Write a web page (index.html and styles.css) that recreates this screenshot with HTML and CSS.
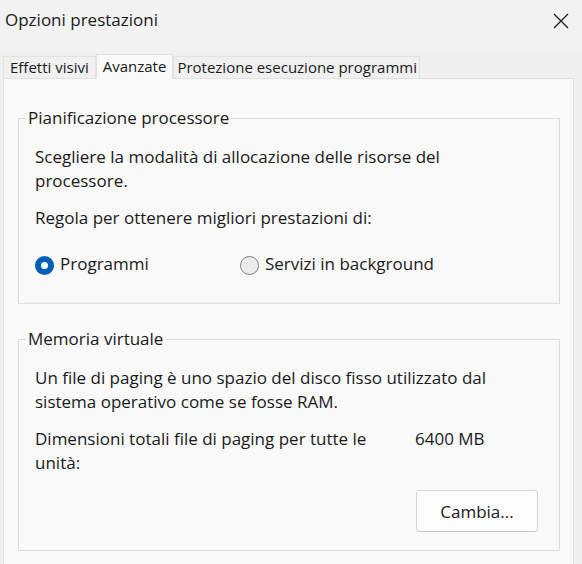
FILE: index.html
```html
<!DOCTYPE html>
<html lang="it">
<head>
<meta charset="utf-8">
<title>Opzioni prestazioni</title>
<link rel="stylesheet" href="styles.css">
</head>
<body>
<div class="dialog">
  <header class="titlebar">
    <span class="title">Opzioni prestazioni</span>
    <span class="close" aria-label="Chiudi">
      <svg width="16" height="16" viewBox="0 0 16 16"><path d="M1 1 L15 15 M15 1 L1 15" stroke="#1a1a1a" stroke-width="1.3" fill="none"/></svg>
    </span>
  </header>
  <nav class="tabs">
    <div class="tab">Effetti visivi</div>
    <div class="tab active">Avanzate</div>
    <div class="tab tab-last">Protezione esecuzione programmi</div>
  </nav>
  <main class="panel">
    <fieldset class="group group-cpu">
      <legend>Pianificazione processore</legend>
      <div class="group-body">
        <p class="text">Scegliere la modalità di allocazione delle risorse del processore.</p>
        <p class="text gap">Regola per ottenere migliori prestazioni di:</p>
        <div class="radios">
          <label class="radio radio-first"><span class="dot checked"></span>Programmi</label>
          <label class="radio"><span class="dot"></span>Servizi in background</label>
        </div>
      </div>
    </fieldset>
    <fieldset class="group group-mem">
      <legend>Memoria virtuale</legend>
      <div class="group-body">
        <p class="text">Un file di paging è uno spazio del disco fisso utilizzato dal sistema operativo come se fosse RAM.</p>
        <div class="size-row gap">
          <span class="size-label">Dimensioni totali file di paging per tutte le unità:</span>
          <span class="size-value">6400 MB</span>
        </div>
        <div class="actions">
          <button class="btn">Cambia...</button>
        </div>
      </div>
    </fieldset>
  </main>
</div>
</body>
</html>
```
FILE: styles.css
```css
* { box-sizing: border-box; }
html, body {
  margin: 0;
  padding: 0;
}
body {
  width: 582px;
  height: 564px;
  overflow: hidden;
  background: #f0f0f0;
  font-family: "Open Sans", "Noto Sans", sans-serif;
  color: #1a1a1a;
}
.dialog {
  display: flex;
  flex-direction: column;
  height: 564px;
}
.titlebar {
  height: 54px;
  display: flex;
  justify-content: space-between;
  align-items: flex-start;
  background: #f2f2f2;
}
.title {
  font-size: 17px;
  line-height: 24px;
  margin: 8px 0 0 5px;
}
.close {
  display: block;
  width: 16px;
  height: 16px;
  margin: 13px 13px 0 0;
}
.close svg { display: block; }
.tabs {
  display: flex;
  align-items: flex-end;
  height: 24px;
  padding-left: 3px;
  position: relative;
  z-index: 1;
}
.tab {
  height: 22px;
  border: 1px solid #e2e2e2;
  border-bottom: none;
  padding: 0 6px;
  font-size: 15px;
  line-height: 21px;
  background: #f0f0f0;
  white-space: nowrap;
}
.tab.active {
  height: 25px;
  margin-bottom: -1px;
  background: #f9f9f9;
  line-height: 22px;
}
.tab-last { padding: 0 2px 0 3px; }
.panel {
  flex: 1;
  margin: 0 8px 0 3px;
  border: 1px solid #e0e0e0;
  border-bottom: none;
  background: #f9f9f9;
  padding: 0 13px 0 14px;
}
.group {
  margin: 0;
  padding: 0;
  border: 1px solid #dcdcdc;
  min-width: 0;
}
.group-cpu { margin-top: 28px; }
.group-mem { margin-top: 24px; }
.group legend {
  margin-left: 7px;
  padding: 0 2px;
  font-size: 17px;
  line-height: 22px;
}
.group-body {
  padding: 16px 21px 0 16px;
}
.group-cpu .group-body { padding-bottom: 27px; }
.group-mem .group-body { padding-bottom: 18px; }
.text {
  margin: 0;
  max-width: 470px;
  font-size: 17px;
  line-height: 24px;
}
.gap { margin-top: 13px; }
.radios {
  display: flex;
  margin-top: 22px;
  font-size: 17px;
  line-height: 24px;
}
.radio {
  display: flex;
  align-items: center;
  gap: 6px;
}
.radio-first { width: 205px; }
.dot {
  width: 19px;
  height: 19px;
  border-radius: 50%;
  border: 1px solid #808080;
  background: #ececec;
  margin-top: 2px;
}
.dot.checked {
  border: 6px solid #005fb8;
  background: #ffffff;
}
.size-row {
  display: flex;
  font-size: 17px;
  line-height: 24px;
}
.size-label { width: 345px; }
.size-value { margin-left: 35px; }
.actions {
  display: flex;
  justify-content: flex-end;
  margin-top: 15px;
}
.btn {
  width: 122px;
  height: 42px;
  border: 1px solid #d6d6d6;
  border-bottom-color: #c4c4c4;
  border-radius: 4px;
  background: #fdfdfd;
  font-family: inherit;
  font-size: 17px;
  color: #1a1a1a;
  padding: 0;
}
```
